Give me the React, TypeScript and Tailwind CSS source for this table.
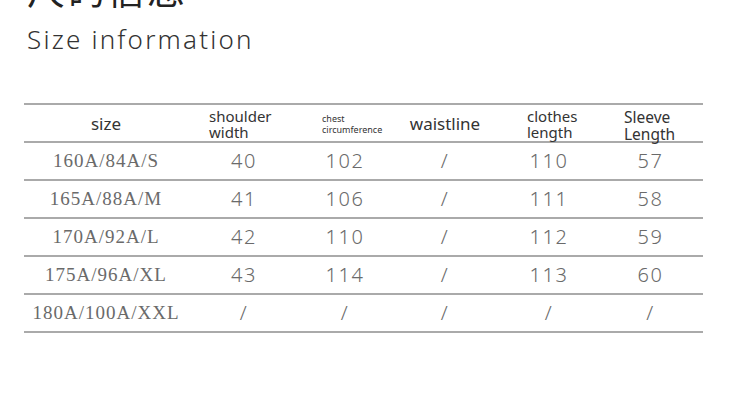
import React from "react";

const rows = [
  ["160A/84A/S", "40", "102", "/", "110", "57"],
  ["165A/88A/M", "41", "106", "/", "111", "58"],
  ["170A/92A/L", "42", "110", "/", "112", "59"],
  ["175A/96A/XL", "43", "114", "/", "113", "60"],
  ["180A/100A/XXL", "/", "/", "/", "/", "/"],
];

const cols = "grid grid-cols-[164px_112px_90px_110px_98px_105px]";

export default function App() {
  return (
    <div className="relative h-[420px] w-[737px] overflow-hidden bg-white text-[#333]">
      {/* heading in Chinese, cut off by the top edge */}
      <div
        className="ml-[27px] mt-[-34px] h-[44px] text-[38px] leading-[44px] tracking-[2px] text-[#222]"
        style={{ fontFamily: '"Noto Sans CJK SC", sans-serif' }}
      >
        尺码信息
      </div>
      <div
        className="ml-[27px] mt-[14px] text-[26px] font-light leading-[30px] tracking-[2.2px] text-[#333]"
        style={{ fontFamily: '"Noto Sans", sans-serif' }}
      >
        Size information
      </div>

      <div className="ml-[24px] mt-[49px] w-[679px]">
        <div className="h-[2px] bg-[#aaa]" />
        <div
          className={`${cols} h-[36px] items-center text-[#333]`}
          style={{ fontFamily: '"Noto Sans", sans-serif' }}
        >
          <div className="text-center text-[17px]">size</div>
          <div className="pl-[21px] text-[15px] leading-[16px]">
            shoulder
            <br />
            width
          </div>
          <div className="pl-[22px] text-[9px] leading-[11px]">
            chest
            <br />
            circumference
          </div>
          <div className="text-center text-[17px]">waistline</div>
          <div className="pl-[27px] text-[15px] leading-[16px]">
            clothes
            <br />
            length
          </div>
          <div className="pl-[26px] pt-[4px] text-[15.5px] leading-[17px]">
            Sleeve
            <br />
            Length
          </div>
        </div>
        {rows.map((r) => (
          <div key={r[0]}>
            <div className="h-[2px] bg-[#aaa]" />
            <div className={`${cols} h-[36px] items-center text-[#6a6a6a]`}>
              <div
                className="text-center text-[19px] tracking-[1px]"
                style={{ fontFamily: '"Liberation Serif", serif' }}
              >
                {r[0]}
              </div>
              {r.slice(1).map((v, i) => (
                <div
                  key={i}
                  className="text-center text-[20px] font-light tracking-[1.5px]"
                  style={{ fontFamily: '"Noto Sans", sans-serif' }}
                >
                  {v}
                </div>
              ))}
            </div>
          </div>
        ))}
        <div className="h-[2px] bg-[#aaa]" />
      </div>
    </div>
  );
}
